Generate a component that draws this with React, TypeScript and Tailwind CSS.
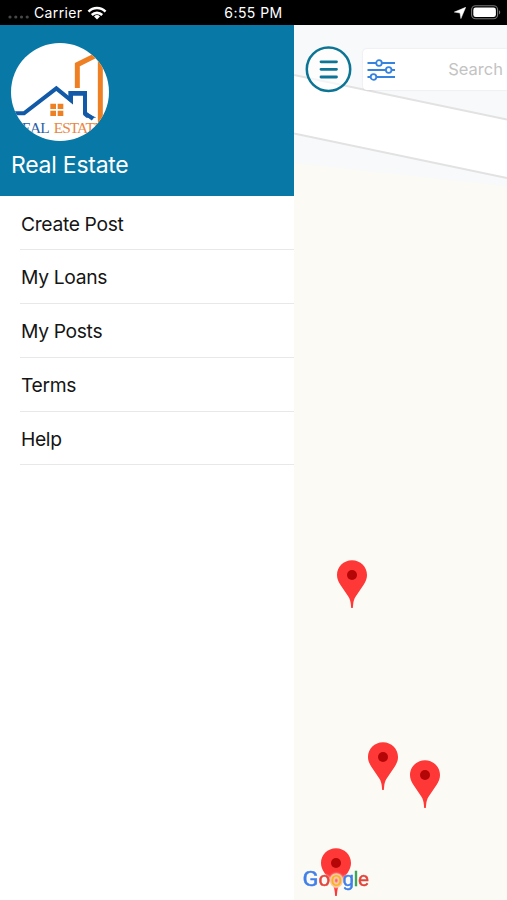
const menuItems = ["Create Post", "My Loans", "My Posts", "Terms", "Help"];

const markers = [
  { id: 1, x: 58.3, y: 535 },
  { id: 2, x: 89, y: 717 },
  { id: 3, x: 131, y: 735 },
  { id: 4, x: 42, y: 823 },
];

const StatusBar = () => (
  <header className="relative flex h-[25px] shrink-0 items-center justify-between bg-black pr-[6px] pl-[8px] text-[14px] text-white">
    <div className="flex items-center">
      <svg width="22" height="4" viewBox="0 0 22 4" fill="#484848" className="mt-[9px]">
        <circle cx="2" cy="2" r="1.6" />
        <circle cx="7.8" cy="2" r="1.6" />
        <circle cx="13.5" cy="2" r="1.6" />
        <circle cx="19.2" cy="2" r="1.6" />
      </svg>
      <span className="ml-[4px] tracking-[0.35px]">Carrier</span>
      <svg width="20" height="14" viewBox="0 0 20 14" className="ml-[5px]" fill="none" stroke="#fff" strokeWidth="2.6">
        <path d="M1.5 5.6a12 12 0 0 1 17 0" />
        <path d="M4.8 9a7.4 7.4 0 0 1 10.4 0" />
        <path d="M10 13.4 7 10.5a4.3 4.3 0 0 1 6 0z" fill="#fff" stroke="none" />
      </svg>
    </div>
    <span className="absolute inset-x-0 text-center tracking-[0.45px]">6:55 PM</span>
    <div className="flex items-center gap-[5px]">
      <svg width="12" height="12" viewBox="0 0 12 12" fill="#fff" stroke="#fff" strokeWidth=".5">
        <path d="M11.7.3 6.9 11.6 6 6 .3 5.1z" />
      </svg>
      <svg width="30" height="15" viewBox="0 0 30 15">
        <rect x=".6" y=".8" width="26" height="13" rx="4" fill="none" stroke="#777" strokeWidth="1.1" />
        <rect x="2.3" y="2.5" width="22.6" height="9.6" rx="2.4" fill="#fff" />
        <path d="M28 5.2c1.7.7 1.7 3.5 0 4.2z" fill="#777" />
      </svg>
    </div>
  </header>
);

const Logo = () => (
  <svg width="98" height="98" viewBox="32 40 294 294" className="rounded-full bg-white">
    <g fill="none" strokeWidth="12">
      <path d="M231 175v-70l58-29" stroke="#ee8023" strokeWidth="15" />
      <path d="M300 85v193" stroke="#ee8023" strokeWidth="15" />
      <path d="M28 251h43l97-75 44 36v-22h42v60l24 18" stroke="#1259a8" />
    </g>
    <path d="M204 184h56v14h-42v26l-14-12z" fill="#1259a8" />
    <path d="M254 246l34 18h-30l-10-9z" fill="#1259a8" />
    <path d="M150 222h17v16h-17zM172 222h17v16h-17zM150 243h17v16h-17zM172 243h17v16h-17z" fill="#ee8023" />
    <g fontFamily="Liberation Serif, serif" fontSize="46">
      <text x="36" y="311" textLength="112" fill="#2b5fa5">REAL</text>
      <text x="160" y="311" textLength="149" fill="#e98643">ESTATE</text>
    </g>
  </svg>
);

const Drawer = () => (
  <aside className="flex w-[294px] shrink-0 flex-col bg-white">
    <div className="h-[171px] bg-[#0878a6] pt-[18px] pl-[11px]">
      <Logo />
      <h1 className="mt-[8px] text-[23px] leading-8 tracking-[-0.25px] text-white">Real Estate</h1>
    </div>
    <nav className="pt-[0.6px] pl-[20px]">
      {menuItems.map((item) => (
        <a
          key={item}
          className="flex h-[53.75px] items-center border-b border-[#e8e8e8] pt-[2px] pl-px text-[19.3px] tracking-[-0.35px] text-[#151515]">
          {item}
        </a>
      ))}
    </nav>
  </aside>
);

const Marker = () => (
  <svg width="32" height="49" viewBox="0 0 32 49">
    <path
      d="M16 .3C7.600.3 1 7 1 15c0 3.500 1.200 6.300 3 9.200l8.300 12.300c1.600 2.500 2.200 4.800 2.500 7.500L15.200 48h1.600l.4-4c.3-2.700.9-5 2.500-7.500L28 24.200c1.800-2.900 3-5.700 3-9.200C31 7 24.400.3 16 .3z"
      fill="#fd3837"
    />
    <circle cx="16" cy="15" r="5" fill="#b40606" />
  </svg>
);

const Roads = () => (
  <svg width="213" height="875" viewBox="0 0 213 875" className="block">
    <rect width="213" height="875" fill="#f8f9fa" />
    <path d="M0 138 213 161.500V875H0z" fill="#fcfaf5" />
    <path d="M0 50 213 94.500V153L0 108.500z" fill="#fff" />
    <path d="M0 50 213 94.500M0 108.500 213 153" stroke="#e2e2e2" strokeWidth="2" />
  </svg>
);

const GoogleMark = () => (
  <svg
    width="74"
    height="30"
    viewBox="0 0 74 30"
    className="overflow-visible drop-shadow-[0_0_1px_rgba(255,255,255,0.9)]">
    <g fontFamily="Roboto, sans-serif" fontSize="20.500" strokeWidth=".5">
      <text x="28.500" y="21" fill="#f5b428" stroke="#ffc79c" strokeWidth="3" paintOrder="stroke">o</text>
      <text x=".5" y="21" fill="#4080e8" stroke="#4080e8" textLength="16" lengthAdjust="spacingAndGlyphs">G</text>
      <text x="16.500" y="21" fill="#e3453b" stroke="#e3453b">o</text>
      <text x="40.500" y="21" fill="#4080e8" stroke="#4080e8">g</text>
      <text x="51.500" y="21" fill="#35a354" stroke="#35a354">l</text>
      <text x="56" y="21" fill="#e3453b" stroke="#e3453b">e</text>
    </g>
  </svg>
);

const SearchBar = () => (
  <div className="absolute top-[21px] left-[11px] flex w-[202px] items-center overflow-hidden">
    <button className="shrink-0">
      <svg width="47" height="47" viewBox="0 0 47 47" fill="none" stroke="#0c7595">
        <circle cx="23.500" cy="23.300" r="21.700" strokeWidth="2.500" fill="#fff" fillOpacity=".65" />
        <path d="M16 15.800h15.500M16 23.300h15.500M16 31h15.500" strokeWidth="2.800" strokeLinecap="round" />
      </svg>
    </button>
    <div className="ml-[11px] flex h-[41px] flex-1 items-center justify-between rounded-l-[4px] bg-white pr-[4px] pl-[4px] shadow-[0_0_2px_rgba(0,0,0,0.12)]">
      <svg width="29" height="22" viewBox="0 0 29 22" fill="#fff" stroke="#3483df" strokeWidth="1.800">
        <path d="M.5 4h27.500M.5 11h27.500M.5 18h27.500" />
        <circle cx="12" cy="4" r="2.800" />
        <circle cx="21.700" cy="11" r="2.800" />
        <circle cx="6.500" cy="18" r="2.800" />
      </svg>
      <span className="text-[16.5px] text-[#c3c3c3]">Search</span>
    </div>
  </div>
);

export default function App() {
  return (
    <div className="flex h-[900px] w-[507px] flex-col overflow-hidden font-['Inter',sans-serif]">
      <StatusBar />
      <main className="flex min-h-0 flex-1">
        <Drawer />
        <section className="relative flex-1 overflow-hidden">
          <Roads />
          {markers.map(({ id, x, y }) => (
            <div key={id} className="absolute -translate-x-1/2" style={{ left: x, top: y }}>
              <Marker />
            </div>
          ))}
          <div className="absolute top-[839.5px] left-[7.5px]">
            <GoogleMark />
          </div>
          <SearchBar />
        </section>
      </main>
    </div>
  );
}
